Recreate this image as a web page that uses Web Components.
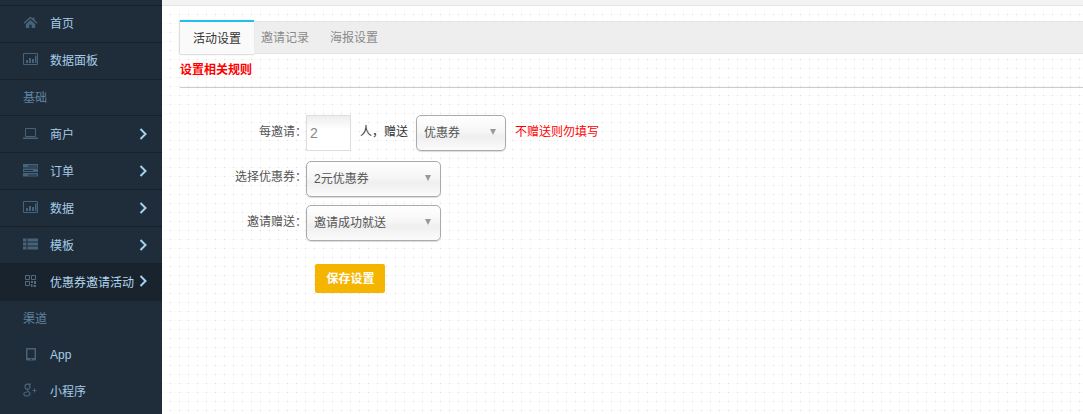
<!DOCTYPE html>
<html>
<head>
<meta charset="utf-8">
<style>
    html, body { margin: 0; height: 100%; overflow: hidden; }
    body {
        font-family: "Liberation Sans", "Noto Sans CJK SC", sans-serif;
        font-size: 12px;
    }
    app-shell { height: 414px; }
    .note { margin-bottom: 5px; }
</style>
</head>
<body>
<app-shell>
    <side-nav slot="side">
        <nav-item icon="home">首页</nav-item>
        <nav-item icon="chart">数据面板</nav-item>
        <nav-title>基础</nav-title>
        <nav-item icon="laptop" arrow>商户</nav-item>
        <nav-item icon="server" arrow>订单</nav-item>
        <nav-item icon="chart" arrow>数据</nav-item>
        <nav-item icon="list" arrow>模板</nav-item>
        <nav-item icon="qr" arrow active>优惠券邀请活动</nav-item>
        <nav-title plain>渠道</nav-title>
        <nav-item plain icon="tablet">App</nav-item>
        <nav-item plain icon="gplus">小程序</nav-item>
    </side-nav>
    <tab-bar>
        <tab-item active>活动设置</tab-item>
        <tab-item>邀请记录</tab-item>
        <tab-item>海报设置</tab-item>
    </tab-bar>
    <section-head>设置相关规则</section-head>
    <form-row label="每邀请：" style="--row-h:36px">
        <num-box>2</num-box>
        <span class="note" style="margin-left:9px;color:#333">人，赠送</span>
        <drop-box width="90" style="margin-left:8px">优惠券</drop-box>
        <span class="note" style="margin-left:9px;color:#f00">不赠送则勿填写</span>
    </form-row>
    <form-row label="选择优惠券：" style="--row-h:38px;margin-top:9px;--label-up:7px">
        <drop-box width="135">2元优惠券</drop-box>
    </form-row>
    <form-row label="邀请赠送：" style="--row-h:36px;margin-top:7px">
        <drop-box width="135">邀请成功就送</drop-box>
    </form-row>
    <save-button>保存设置</save-button>
</app-shell>

<script>
const ICONS = {
    home: '<path fill="currentColor" d="M7.500 1.500.5 7.800l1 1 6-5.300 6 5.300 1-1-3-2.700V2.500h-2v1.200zM2.800 9.200 7.500 5l4.700 4.200V13H8.700V9.700H6.300V13H2.800z"/>',
    chart: '<path fill="none" stroke="currentColor" d="M.5 1.500h14v11H.5z"/><path fill="currentColor" d="M3 8h2v3H3zM6 6h2v5H6zM9 7h2v4H9zM12 3.500h1.500V11H12z"/>',
    laptop: '<path fill="none" stroke="currentColor" d="M2.500 2.500h10v8h-10z"/><path fill="currentColor" d="M0 11.500h15V13H0z"/>',
    server: '<path fill="currentColor" d="M0 1h15v3.500H0zM0 5.500h15V9H0zM0 10h15v3.500H0z"/><path fill="#1f2d3a" d="M5 2.500h9v1H5zM1 7h9v1H1zM5 11.500h9v1H5z"/>',
    list: '<path fill="currentColor" d="M0 1.500h3.500v3H0zM4.500 1.500H15v3H4.500zM0 5.500h3.500v3H0zM4.500 5.500H15v3H4.500zM0 9.500h3.500v3H0zM4.500 9.500H15v3H4.500z"/>',
    qr: '<path fill="none" stroke="currentColor" d="M2.500 1.500h4v4h-4zM8.500 1.500h4v4h-4zM2.500 7.500h4v4h-4z"/><path fill="currentColor" d="M8 7h2v2H8zM11 7h2v3h-2zM8 10h1.500v3H8zM10.500 11H13v2h-2.500z"/>',
    tablet: '<path fill="currentColor" fill-rule="evenodd" d="M4 1h8a1 1 0 0 1 1 1v10.500a1 1 0 0 1-1 1H4a1 1 0 0 1-1-1V2a1 1 0 0 1 1-1zm.5 1.500v8.500h7V2.500h-7zM7.200 11.800h1.600v1H7.200z"/>',
    gplus: '<path fill="none" stroke="currentColor" stroke-width="1.200" d="M8 1.200H4.500C2.800 1.200 2 2.500 2 3.700 2 5 3 6.200 4.500 6.200S7 5 7 3.700 6.200 1.200 4.500 1.200M4.800 6.200C3.800 7 4.400 7.800 5.500 8.500 7 9.500 7.300 10 7 11.200 6.700 12.400 5.200 13 3.700 13 2 13 .8 12.200.8 11 .8 9.800 2.200 9 4.500 9"/><path fill="currentColor" d="M11 5.500h1V7h1.500v1H12v1.500h-1V8H9.500V7H11z"/>'
};

class AppShell extends HTMLElement {
    constructor() {
        super();
        this.attachShadow({ mode: 'open' });
        this.shadowRoot.innerHTML = `
            <style>
                :host { display: flex; width: 100%; }
                aside { width: 162px; flex: none; }
                main {
                    flex: 1;
                    min-width: 0;
                    background-color: #fff;
                    background-image:
                        radial-gradient(circle at 4.5px 4.5px, #dcdcdc 0.6px, transparent 0.9px),
                        linear-gradient(#fbfbfb 1px, transparent 1px),
                        linear-gradient(90deg, #fbfbfb 1px, transparent 1px);
                    background-size: 9px 9px;
                    background-position: 4px 1px, 8px 5px, 8px 5px;
                }
                .top { height: 5px; background: #f3f3f3; border-bottom: 1px solid #e7e3e3; }
                .body { padding: 14px 0 0 18px; }
            </style>
            <aside><slot name="side"></slot></aside>
            <main>
                <div class="top"></div>
                <div class="body"><slot></slot></div>
            </main>
        `;
    }
}

class SideNav extends HTMLElement {
    constructor() {
        super();
        this.attachShadow({ mode: 'open' });
        this.shadowRoot.innerHTML = `
            <style>
                :host { display: block; height: 414px; overflow: hidden; background: #1f2d3a; padding-top: 5px; box-sizing: border-box; }
            </style>
            <slot></slot>
        `;
    }
}

class NavItem extends HTMLElement {
    constructor() {
        super();
        this.attachShadow({ mode: 'open' });
        this.shadowRoot.innerHTML = `
            <style>
                :host {
                    display: flex;
                    align-items: center;
                    box-sizing: border-box;
                    height: 37px;
                    padding: 0 0 3px 23px;
                    border-top: 1px solid #16212b;
                    color: #a6cbe6;
                    font-size: 12px;
                }
                :host([arrow]) { padding-bottom: 1px; }
                :host([plain]) { border-top: 0; height: 36px; padding-bottom: 1px; }
                :host([active]) { background: #18232d; border-top-color: #16212b; color: #b4d6ee; height: 38px; padding-bottom: 3px; }
                .icon { width: 15px; height: 15px; color: #47637a; flex: none; margin-right: 12px; }
                .label { flex: 1; white-space: nowrap; }
                .arrow { width: 8px; height: 12px; margin-right: 15px; color: #a6d0f0; flex: none; display: none; }
                :host([arrow]) .arrow { display: block; }
                :host([active]) .icon { color: #53697c; }
            </style>
            <svg class="icon" viewBox="0 0 15 15"></svg>
            <span class="label"><slot></slot></span>
            <svg class="arrow" viewBox="0 0 8 12"><path fill="none" stroke="currentColor" stroke-width="2" d="M1.500 1l5 5-5 5"/></svg>
        `;
    }

    connectedCallback() {
        this.shadowRoot.querySelector('.icon').innerHTML = ICONS[this.getAttribute('icon')] || '';
    }
}

class NavTitle extends HTMLElement {
    constructor() {
        super();
        this.attachShadow({ mode: 'open' });
        this.shadowRoot.innerHTML = `
            <style>
                :host {
                    display: flex;
                    align-items: center;
                    box-sizing: border-box;
                    height: 36px;
                    padding: 0 0 3px 23px;
                    border-top: 1px solid #16212b;
                    color: #5f84a0;
                    font-size: 12px;
                }
                :host([plain]) { border-top: 0; }
            </style>
            <slot></slot>
        `;
    }
}

class TabBar extends HTMLElement {
    constructor() {
        super();
        this.attachShadow({ mode: 'open' });
        this.shadowRoot.innerHTML = `
            <style>
                :host {
                    display: flex;
                    height: 31px;
                    margin-top: 1px;
                    background: #eee;
                    border-top: 1px solid #e4e4e4;
                    border-bottom: 1px solid #e2e2e2;
                }
            </style>
            <slot></slot>
        `;
    }
}

class TabItem extends HTMLElement {
    constructor() {
        super();
        this.attachShadow({ mode: 'open' });
        this.shadowRoot.innerHTML = `
            <style>
                :host {
                    display: flex;
                    align-items: center;
                    padding: 0 13px 3px 7px;
                    font-size: 12px;
                    color: #8a8a8a;
                }
                :host([active]) {
                    padding: 0 13px 2px;
                    margin: -2px 0 -1px 0;
                    height: 30px;
                    background: #fafafa;
                    color: #333;
                    border-top: 2px solid #1fc0ef;
                    box-shadow: -1px 0 1px #ddd, 0 1px 1px #e0e0e0;
                }
                :host(:last-child) { padding-left: 8px; }
            </style>
            <slot></slot>
        `;
    }
}

class SectionHead extends HTMLElement {
    constructor() {
        super();
        this.attachShadow({ mode: 'open' });
        this.shadowRoot.innerHTML = `
            <style>
                :host {
                    display: block;
                    height: 33px;
                    line-height: 32px;
                    color: #f00;
                    font-weight: bold;
                    font-size: 12px;
                    border-bottom: 1px solid #ccc;
                    margin-bottom: 27px;
                }
            </style>
            <slot></slot>
        `;
    }
}

class FormRow extends HTMLElement {
    constructor() {
        super();
        this.attachShadow({ mode: 'open' });
        this.shadowRoot.innerHTML = `
            <style>
                :host { display: flex; align-items: center; height: var(--row-h, 36px); font-size: 12px; }
                label { width: 127px; flex: none; text-align: right; color: #555; margin: 0 -1px var(--label-up, 5px) 0; }
                .ctrl { display: flex; align-items: center; }
            </style>
            <label></label>
            <div class="ctrl"><slot></slot></div>
        `;
    }

    connectedCallback() {
        this.shadowRoot.querySelector('label').textContent = this.getAttribute('label');
    }
}

class NumBox extends HTMLElement {
    constructor() {
        super();
        this.attachShadow({ mode: 'open' });
        this.shadowRoot.innerHTML = `
            <style>
                :host {
                    display: flex;
                    align-items: center;
                    box-sizing: border-box;
                    width: 45px;
                    height: 36px;
                    padding: 0 0 1px 3px;
                    background: linear-gradient(#eee, #fff 40%);
                    border: 1px solid #ddd;
                    color: #888;
                    font-size: 14px;
                }
            </style>
            <slot></slot>
        `;
    }
}

class DropBox extends HTMLElement {
    constructor() {
        super();
        this.attachShadow({ mode: 'open' });
        this.shadowRoot.innerHTML = `
            <style>
                :host {
                    display: flex;
                    align-items: center;
                    justify-content: space-between;
                    box-sizing: border-box;
                    height: 36px;
                    padding: 0 9px 3px 7px;
                    border: 1px solid #aaa;
                    border-radius: 5px;
                    background: linear-gradient(#fff, #f6f6f6 45%, #efefef 60%, #fbfbfb);
                    box-shadow: 0 1px 1px #ddd;
                    color: #555;
                    font-size: 12px;
                }
                i { width: 0; height: 0; border: 3.500px solid transparent; border-top: 6px solid #999; border-bottom: 0; }
            </style>
            <span><slot></slot></span>
            <i></i>
        `;
    }

    connectedCallback() {
        this.style.width = this.getAttribute('width') + 'px';
    }
}

class SaveButton extends HTMLElement {
    constructor() {
        super();
        this.attachShadow({ mode: 'open' });
        this.shadowRoot.innerHTML = `
            <style>
                :host {
                    display: flex;
                    align-items: center;
                    justify-content: center;
                    box-sizing: border-box;
                    width: 70px;
                    height: 29px;
                    margin: 23px 0 0 135px;
                    padding: 0 0 2px 1px;
                    background: #f5b400;
                    border-radius: 2px;
                    color: #fff;
                    font-weight: bold;
                    font-size: 12px;
                }
            </style>
            <slot></slot>
        `;
    }
}

customElements.define('app-shell', AppShell);
customElements.define('side-nav', SideNav);
customElements.define('nav-item', NavItem);
customElements.define('nav-title', NavTitle);
customElements.define('tab-bar', TabBar);
customElements.define('tab-item', TabItem);
customElements.define('section-head', SectionHead);
customElements.define('form-row', FormRow);
customElements.define('num-box', NumBox);
customElements.define('drop-box', DropBox);
customElements.define('save-button', SaveButton);
</script>
</body>
</html>
